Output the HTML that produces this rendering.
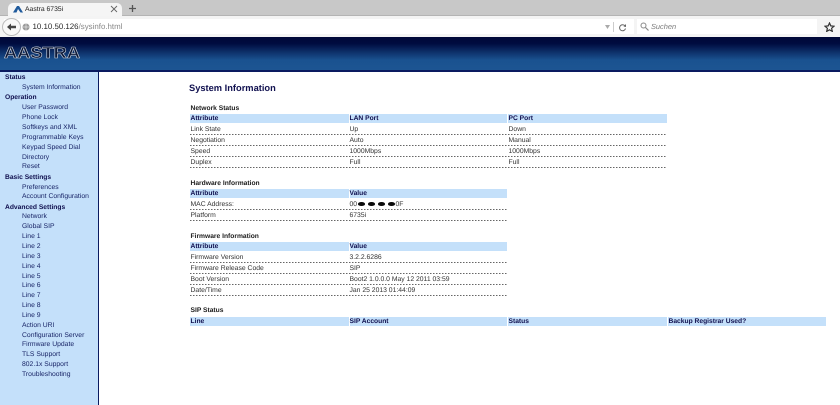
<!DOCTYPE html>
<html><head><meta charset="utf-8"><style>
html,body{margin:0;padding:0;width:840px;height:405px;overflow:hidden;background:#fff}
body{position:relative;font-family:"Liberation Sans",sans-serif;font-size:6.8px;color:#333;text-rendering:geometricPrecision}
#w{left:0;top:0;width:840px;height:405px;filter:blur(.3px)}
div{position:absolute;white-space:nowrap}
.t{line-height:10px;height:10px;margin-top:.8px}
.s{color:#1a2668;left:22px}
.h{color:#10104f;font-weight:bold;left:5px;font-size:6.7px}
.c{color:#10104f;font-weight:bold;font-size:6.7px}
.b{background:#c4e0fa;height:9px}
.d{height:1px;background:repeating-linear-gradient(90deg,#666 0 1.5px,transparent 1.5px 3px)}
.sec{color:#1c1c1c;font-weight:bold;left:190.5px;font-size:6.7px}
.blot{background:#0a0a0a;height:3.6px;width:7px;border-radius:50%;top:202.2px}
</style></head><body><div id="w">
<div style="left:0;top:0;width:840px;height:16px;background:#c8c8c8"></div>
<div style="left:0;top:15px;width:840px;height:1px;background:#b4b4b4"></div>
<div style="left:8px;top:3px;width:114px;height:14px;background:#f5f5f5;border-radius:5px 5px 0 0"></div>
<svg style="position:absolute;left:13px;top:5px" width="10" height="8"><path d="M0 7.5L4 1h2l4 6.5H7.5L5 4 3.5 7.5z" fill="#1f5a9c"/></svg>
<div class="t" style="left:25px;top:4px;color:#222">Aastra 6735i</div>
<svg style="position:absolute;left:110px;top:5px" width="8" height="8"><path d="M1 1l6 6M7 1l-6 6" stroke="#666" stroke-width="0.9"/></svg>
<svg style="position:absolute;left:128px;top:4px" width="9" height="9"><path d="M4.5 1v7M1 4.5h7" stroke="#555" stroke-width="1.3"/></svg>
<div style="left:0;top:16px;width:840px;height:21px;background:#f4f4f4"></div>
<div style="left:4px;top:19px;width:630px;height:15px;background:#fff"></div>
<div style="left:637px;top:19px;width:180px;height:15px;background:#fff"></div>
<div style="left:2px;top:18px;width:19px;height:18px;border-radius:50%;background:#f8f8f8;border:1px solid #bbb;box-sizing:border-box"></div>
<svg style="position:absolute;left:6px;top:22px" width="11" height="10"><path d="M1 5L5 1.5V3.800H10V6.200H5V8.500Z" fill="#444"/></svg>
<svg style="position:absolute;left:22px;top:23px" width="8" height="8"><circle cx="4" cy="4" r="3.5" fill="#999"/><path d="M1 4h6M4 .5v7" stroke="#fff" stroke-width=".5"/></svg>
<div class="t" style="left:32.5px;top:21.5px;font-size:7.9px;color:#2a2a2a">10.10.50.126<span style="color:#888">/sysinfo.html</span></div>
<svg style="position:absolute;left:604px;top:25px" width="7" height="5"><path d="M1 0h5L3.5 4z" fill="#aaa"/></svg>
<div style="left:613px;top:22px;width:1px;height:10px;background:#ccc"></div>
<svg style="position:absolute;left:618px;top:23px" width="9" height="9"><path d="M7 3A3 3 0 1 0 7.5 5.500" fill="none" stroke="#666" stroke-width="1"/><path d="M5.5 3.5L8 1V4z" fill="#666"/></svg>
<svg style="position:absolute;left:640px;top:22px" width="9" height="9"><circle cx="3.5" cy="3.5" r="2.5" fill="none" stroke="#888" stroke-width="1"/><path d="M5.5 5.5L8.500 8.500" stroke="#888" stroke-width="1.2"/></svg>
<div class="t" style="left:651px;top:21.5px;font-size:7.4px;font-style:italic;color:#777">Suchen</div>
<svg style="position:absolute;left:824px;top:22px" width="11" height="10"><path d="M5.5 1l1.3 2.900 3.200.3-2.400 2.100.7 3.100-2.800-1.600-2.800 1.600.7-3.100L1 4.200l3.200-.3z" fill="none" stroke="#333" stroke-width="1.2"/></svg>
<div style="left:0;top:37px;width:840px;height:33px;background:linear-gradient(#000838 0,#000c40 20%,#1a5290 70%,#1d5592 100%)"></div>
<div style="left:0;top:70px;width:840px;height:2px;background:#0a1a60"></div>
<svg style="position:absolute;left:3px;top:43px" width="79" height="20"><text x="1" y="15" font-family="Liberation Sans" font-size="16" font-weight="bold" textLength="76" lengthAdjust="spacingAndGlyphs" fill="#0c1838" stroke="#d0d4dc" stroke-width="0.55">AASTRA</text></svg>
<div style="left:0;top:72px;width:98px;height:333px;background:#c4e0fa"></div>
<div style="left:98px;top:71px;width:1px;height:334px;background:#0a1a60"></div>
<div class="t h" style="top:72.5px">Status</div>
<div class="t s" style="top:82.5px">System Information</div>
<div class="t h" style="top:92.5px">Operation</div>
<div class="t s" style="top:102.5px">User Password</div>
<div class="t s" style="top:112.5px">Phone Lock</div>
<div class="t s" style="top:122px">Softkeys and XML</div>
<div class="t s" style="top:132px">Programmable Keys</div>
<div class="t s" style="top:142px">Keypad Speed Dial</div>
<div class="t s" style="top:152px">Directory</div>
<div class="t s" style="top:161.5px">Reset</div>
<div class="t h" style="top:172px">Basic Settings</div>
<div class="t s" style="top:182px">Preferences</div>
<div class="t s" style="top:191.5px">Account Configuration</div>
<div class="t h" style="top:202px">Advanced Settings</div>
<div class="t s" style="top:211.5px">Network</div>
<div class="t s" style="top:221.5px">Global SIP</div>
<div class="t s" style="top:231.5px">Line 1</div>
<div class="t s" style="top:241px">Line 2</div>
<div class="t s" style="top:251px">Line 3</div>
<div class="t s" style="top:261px">Line 4</div>
<div class="t s" style="top:271px">Line 5</div>
<div class="t s" style="top:280.5px">Line 6</div>
<div class="t s" style="top:290.5px">Line 7</div>
<div class="t s" style="top:300.5px">Line 8</div>
<div class="t s" style="top:310px">Line 9</div>
<div class="t s" style="top:320px">Action URI</div>
<div class="t s" style="top:330px">Configuration Server</div>
<div class="t s" style="top:339.5px">Firmware Update</div>
<div class="t s" style="top:349.5px">TLS Support</div>
<div class="t s" style="top:359.5px">802.1x Support</div>
<div class="t s" style="top:369px">Troubleshooting</div>

<div style="left:189px;top:81.5px;font-size:9.3px;line-height:12px;font-weight:bold;color:#10104f">System Information</div>

<div class="t sec" style="top:103px">Network Status</div>
<div class="b" style="left:190px;top:114px;width:158.5px"></div><div class="b" style="left:349.5px;top:114px;width:157.5px"></div><div class="b" style="left:508px;top:114px;width:158.5px"></div>
<div class="t c" style="left:190.5px;top:113.5px">Attribute</div><div class="t c" style="left:349.5px;top:113.5px">LAN Port</div><div class="t c" style="left:508.5px;top:113.5px">PC Port</div>
<div class="t" style="left:190.5px;top:124px">Link State</div><div class="t" style="left:349.5px;top:124px">Up</div><div class="t" style="left:508.5px;top:124px">Down</div>
<div class="d" style="left:190px;top:133.5px;width:476px"></div>
<div class="t" style="left:190.5px;top:135px">Negotiation</div><div class="t" style="left:349.5px;top:135px">Auto</div><div class="t" style="left:508.5px;top:135px">Manual</div>
<div class="d" style="left:190px;top:144.5px;width:476px"></div>
<div class="t" style="left:190.5px;top:146px">Speed</div><div class="t" style="left:349.5px;top:146px">1000Mbps</div><div class="t" style="left:508.5px;top:146px">1000Mbps</div>
<div class="d" style="left:190px;top:155.5px;width:476px"></div>
<div class="t" style="left:190.5px;top:157px">Duplex</div><div class="t" style="left:349.5px;top:157px">Full</div><div class="t" style="left:508.5px;top:157px">Full</div>
<div class="d" style="left:190px;top:166.5px;width:476px"></div>

<div class="t sec" style="top:178px">Hardware Information</div>
<div class="b" style="left:190px;top:188.5px;width:158.5px"></div><div class="b" style="left:349.5px;top:188.5px;width:157.5px"></div>
<div class="t c" style="left:190.5px;top:188px">Attribute</div><div class="t c" style="left:349.5px;top:188px">Value</div>
<div class="t" style="left:190.5px;top:199px">MAC Address:</div>
<div class="t" style="left:349.5px;top:199px">00</div><div class="blot" style="left:358px"></div><div class="blot" style="left:368px"></div><div class="blot" style="left:378px"></div><div class="blot" style="left:387.5px"></div><div class="t" style="left:395.5px;top:199px">0F</div>
<div class="d" style="left:190px;top:208.5px;width:317px"></div>
<div class="t" style="left:190.5px;top:210px">Platform</div><div class="t" style="left:349.5px;top:210px">6735i</div>
<div class="d" style="left:190px;top:219.5px;width:317px"></div>

<div class="t sec" style="top:231px">Firmware Information</div>
<div class="b" style="left:190px;top:241.5px;width:158.5px"></div><div class="b" style="left:349.5px;top:241.5px;width:157.5px"></div>
<div class="t c" style="left:190.5px;top:241px">Attribute</div><div class="t c" style="left:349.5px;top:241px">Value</div>
<div class="t" style="left:190.5px;top:252px">Firmware Version</div><div class="t" style="left:349.5px;top:252px">3.2.2.6286</div>
<div class="d" style="left:190px;top:261.5px;width:317px"></div>
<div class="t" style="left:190.5px;top:263px">Firmware Release Code</div><div class="t" style="left:349.5px;top:263px">SIP</div>
<div class="d" style="left:190px;top:272.5px;width:317px"></div>
<div class="t" style="left:190.5px;top:274px">Boot Version</div><div class="t" style="left:349.5px;top:274px">Boot2 1.0.0.0 May 12 2011 03:59</div>
<div class="d" style="left:190px;top:283.5px;width:317px"></div>
<div class="t" style="left:190.5px;top:285px">Date/Time</div><div class="t" style="left:349.5px;top:285px">Jan 25 2013 01:44:09</div>
<div class="d" style="left:190px;top:294.5px;width:317px"></div>

<div class="t sec" style="top:305.5px">SIP Status</div>
<div class="b" style="left:190px;top:316.5px;width:158.5px"></div><div class="b" style="left:349.5px;top:316.5px;width:157.5px"></div><div class="b" style="left:508px;top:316.5px;width:159px"></div><div class="b" style="left:668px;top:316.5px;width:158px"></div>
<div class="t c" style="left:190.5px;top:316px">Line</div><div class="t c" style="left:349.5px;top:316px">SIP Account</div><div class="t c" style="left:508.5px;top:316px">Status</div><div class="t c" style="left:668.5px;top:316px">Backup Registrar Used?</div>
</div></body></html>
